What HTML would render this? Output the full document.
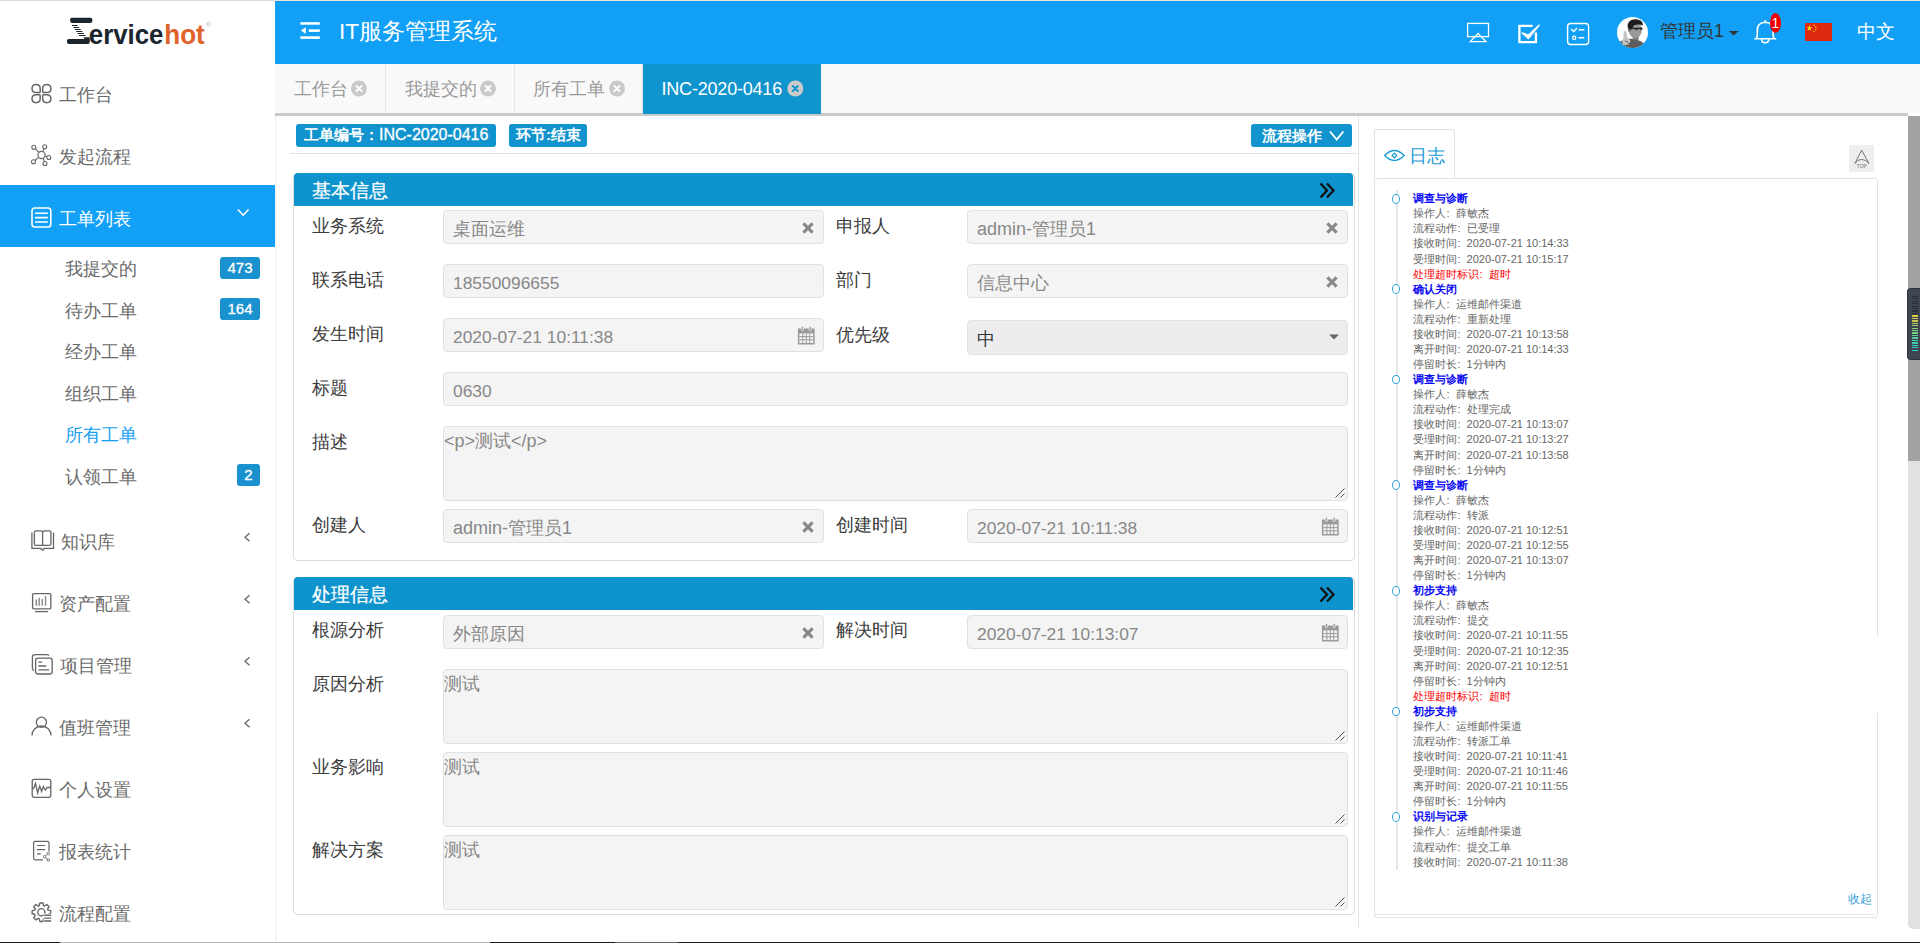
<!DOCTYPE html>
<html><head><meta charset="utf-8">
<style>
*{box-sizing:border-box;margin:0;padding:0}
html,body{width:1920px;height:943px;overflow:hidden;background:#fff;font-family:"Liberation Sans",sans-serif;}
.a{position:absolute;white-space:nowrap}
#topline{left:0;top:0;width:1920px;height:1px;background:#d9dadf}
#side{left:0;top:1px;width:277px;height:942px;background:#fff;border-right:1px solid #fafafa}
#hdr{left:275px;top:1px;width:1645px;height:63px;background:#12a0f6}
.mi{left:0;width:275px;height:62px}
.mt{font-size:18px;color:#6b6b6b;line-height:20px}
.sub{font-size:18px;color:#6b6b6b;line-height:20px;left:65px}
.bdg{background:#1992cf;color:#fff;font-size:15px;-webkit-text-stroke:0.3px #fff;border-radius:3px;text-align:center;line-height:22px;height:22px}
.tab{top:64px;height:49px;border-right:1px solid #e6e6e6;background:#f9f9f9}
.tabt{font-size:18px;color:#999;line-height:20px;top:15px}
.cx{width:16px;height:16px;border-radius:50%;background:#c9c9c9}
.lbl{font-size:18px;color:#3c3c3c;line-height:20px}
.inp{background:#f4f4f4;border:1px solid #dce3e8;border-radius:4px}
.val{font-size:18px;color:#888;line-height:20px}
.sech{left:294px;width:1059px;height:33px;background:#0f93cc;border-radius:4px 4px 0 0}
.sect{font-size:19px;color:#fff;line-height:20px;-webkit-text-stroke:0.25px #fff}
.log{font-size:11px;line-height:15.08px;color:#666}
.log b{color:#0808f6;font-weight:bold;display:block}
.log i{color:#f00;font-style:normal;display:block}
.log span{display:block}
.log em{font-style:normal;display:inline-block;width:9.6px;padding-left:0.6px}
</style></head><body>
<div class="a" id="topline"></div>
<div class="a" id="side"></div>
<div class="a" style="left:275px;top:1px;width:1px;height:942px;background:#f2f2f2"></div>
<div class="a" id="hdr"></div>
<div class="a" style="left:275px;top:0;width:1645px;height:1px;background:#efe2dc"></div>
<div class="a" style="left:275px;top:1px;width:1645px;height:1px;background:#0a9cf8"></div>
<div class="a" style="left:0;top:185px;width:275px;height:62px;background:#12a1f7"></div>

<!-- logo -->
<svg class="a" style="left:0;top:0" width="275" height="62" viewBox="0 0 275 62">
 <g fill="#1b252e">
  <path d="M71.5 17.8 H90.3 Q92.4 17.8 92.4 19.9 V20.8 Q92.4 22.9 90.3 22.9 H72.2 Q70.2 22.9 70.2 20.9 V19.6 Q70.2 17.8 71.5 17.8 Z"/>
  <path d="M68.6 38.9 H84.6 L83.4 37.2 H88.8 Q89.8 37.2 89.8 39.4 V41.8 Q89.8 44 87.8 44 H68.8 Q67 44 67 42 V40.6 Q67 38.9 68.6 38.9 Z"/>
 </g>
 <g stroke="#1b252e" stroke-width="1.05">
  <path d="M72 25.5 H77.6 M73.4 27.5 H79.2 M74.8 29.5 H80.8 M76.2 31.5 H82.4 M77.6 33.5 H84 M79 35.5 H85.6"/>
 </g>
 <text x="88.8" y="44" font-family="Liberation Sans" font-weight="bold" font-size="27.4" fill="#1b252e" textLength="74.5" lengthAdjust="spacingAndGlyphs">ervice</text>
 <text x="164.3" y="44" font-family="Liberation Sans" font-weight="bold" font-size="27.4" fill="#e0612a" textLength="40.5" lengthAdjust="spacingAndGlyphs">hot</text>
 <circle cx="208.6" cy="24" r="1.7" fill="none" stroke="#888" stroke-width="0.5"/>
</svg>

<!-- header content -->
<svg class="a" style="left:290px;top:15px" width="40" height="30" viewBox="290 15 40 30" fill="#fff">
  <rect x="300.4" y="22.2" width="19.4" height="2.5"/>
  <rect x="308.8" y="29.3" width="11" height="2.6"/>
  <rect x="300.4" y="36.3" width="19.4" height="2.6"/>
  <path d="M300.8 30.5 L305.9 27.2 V33.7 Z"/>
</svg>
<div class="a" style="left:339px;top:19.5px;font-size:22.6px;line-height:24px;color:#fff">IT服务管理系统</div>
<svg class="a" style="left:1460px;top:10px" width="460" height="45" viewBox="1460 10 460 45" fill="none" stroke="#fff">
  <rect x="1467.6" y="23.4" width="20.9" height="13.2" stroke-width="1.3"/>
  <path d="M1470.3 41.6 L1478.1 33.5 L1485.9 41.6 Z" stroke-width="1.3"/>
  <path d="M1535.9 32.5 V42.1 H1519.4 V25.9 H1532.6" stroke-width="2.3"/>
  <path d="M1522.3 33 L1528.3 38.5 L1539 25.2 L1528.3 35.2 Z" fill="#fff" stroke-width="1.5" stroke-linejoin="round"/>
  <rect x="1567.6" y="23.5" width="21" height="21" rx="3" stroke-width="1.4"/>
  <path d="M1571 29 L1573.8 31.6 L1576.8 28 M1578.6 29.8 H1584.3 M1578.6 37.8 H1584.3" stroke-width="1.4"/>
  <circle cx="1574.2" cy="37.8" r="1.6" stroke-width="1.3"/>
  <path d="M1756.3 38.7 Q1757.3 37 1757.3 34.5 V30.5 Q1757.3 22.6 1765.2 22.3 Q1773.1 22.6 1773.1 30.5 V34.5 Q1773.1 37 1774.1 38.7 M1754.3 38.7 H1776.2 M1761.6 39 Q1761.6 42.8 1765.2 42.8 Q1768.8 42.8 1768.8 39 M1765.2 20.2 V22.3" stroke-width="1.6"/>
</svg>
<div class="a" style="left:1617px;top:17px;width:31px;height:31px;border-radius:50%;background:#fff;overflow:hidden">
 <svg width="31" height="31" viewBox="0 0 31 31">
  <path d="M2 25 Q9 20.5 17 22 Q24 23.5 28 27 L28 31 H2 Z" fill="#5c5c5c"/>
  <path d="M15 17 L22 17 L21.5 23 L16 23 Z" fill="#7a7a7a"/>
  <ellipse cx="18.3" cy="12.8" rx="6.6" ry="8.3" fill="#9a9a9a"/>
  <ellipse cx="12.4" cy="12.2" rx="1.6" ry="2.6" fill="#6e6e6e"/>
  <path d="M10.6 10 Q10.5 2.3 18.3 2.3 Q25.8 2.3 26 8.5 Q22 6.5 17 8.2 L14.6 12.6 Q12 12.5 10.6 10 Z" fill="#1c1c1c"/>
  <path d="M14.5 11.4 H25.4" stroke="#222" stroke-width="1.3"/>
  <path d="M17 11.6 Q19.5 14.6 22 11.6 M22.5 11.6 Q24 13.8 25.5 11.8" stroke="#333" stroke-width="0.9" fill="none"/>
  <path d="M6.8 14.5 Q8.3 13.3 9.4 15 L10.2 20.6 L13.5 23.2 L12 28 L6 28 Q4.2 25 6.3 21.5 Z" fill="#c2c2c2"/>
  <path d="M8 24 L11 25 M10 27 L13 26.5" stroke="#555" stroke-width="0.8"/>
 </svg>
</div>
<div class="a" style="left:1660px;top:20.5px;font-size:18px;line-height:20px;color:#333">管理员1</div>
<svg class="a" style="left:1725px;top:25px" width="15" height="15" viewBox="1725 25 15 15"><path d="M1728.8 31 H1738.6 L1733.7 35.4 Z" fill="#333"/></svg>
<div class="a" style="left:1770px;top:13px;width:11px;height:20px;border-radius:50%;background:#f20000;color:#fff;font-size:14px;line-height:20px;text-align:center">1</div>
<svg class="a" style="left:1805px;top:23px" width="27" height="18" viewBox="0 0 30 20">
  <rect width="30" height="20" fill="#de2910"/>
  <path d="M5 2.2 L5.9 4.6 H8.4 L6.4 6.1 L7.1 8.6 L5 7.1 L2.9 8.6 L3.6 6.1 L1.6 4.6 H4.1Z" fill="#ffde00"/>
  <circle cx="10" cy="2.5" r="0.8" fill="#ffde00"/><circle cx="12" cy="4.5" r="0.8" fill="#ffde00"/>
  <circle cx="12" cy="7.3" r="0.8" fill="#ffde00"/><circle cx="10" cy="9.3" r="0.8" fill="#ffde00"/>
</svg>
<div class="a" style="left:1857px;top:21px;font-size:18.6px;line-height:21px;color:#fff">中文</div>

<!-- tabs -->
<div class="a" style="left:275px;top:64px;width:1645px;height:49px;background:#f9f9f9"></div>
<div class="a" style="left:275px;top:113px;width:1633px;height:3px;background:#cacaca"></div>
<div class="a tab" style="left:275px;width:111px"></div>
<div class="a tab" style="left:386px;width:129px"></div>
<div class="a tab" style="left:515px;width:128px"></div>
<div class="a" style="left:643px;top:64px;width:178px;height:50px;background:#0f94cd"></div>
<div class="a tabt" style="left:294px;top:79px">工作台</div>
<div class="a tabt" style="left:405px;top:79px">我提交的</div>
<div class="a tabt" style="left:533px;top:79px">所有工单</div>
<div class="a tabt" style="left:661.5px;top:79px;color:#fff;letter-spacing:-0.2px">INC-2020-0416</div>
<svg class="a" style="left:0;top:70px" width="820" height="40" viewBox="0 70 820 40">
 <g transform="translate(0.5 0)">
  <circle cx="358.5" cy="88.5" r="8" fill="#cacaca"/>
  <circle cx="487.5" cy="88.5" r="8" fill="#cacaca"/>
  <circle cx="616.5" cy="88.5" r="8" fill="#cacaca"/>
  <circle cx="794.8" cy="88.5" r="8" fill="#cacaca"/>
 </g>
 <g stroke="#fff" stroke-width="1.9" stroke-linecap="round" transform="translate(0.5 0)">
  <path d="M356.0 86 L361.0 91 M361.0 86 L356.0 91"/>
  <path d="M485.0 86 L490.0 91 M490.0 86 L485.0 91"/>
  <path d="M614.0 86 L619.0 91 M619.0 86 L614.0 91"/>
  <path d="M792.3 86 L797.3 91 M797.3 86 L792.3 91" stroke="#0f94cd"/>
 </g>
</svg>


<!-- main content -->
<div class="a" style="left:296px;top:124px;width:200px;height:23px;background:#1193cd;border-radius:3px"></div>
<div class="a" style="left:304px;top:126px;font-size:15px;line-height:18px;color:#fff;font-weight:bold">工单编号：<span style="font-weight:normal;font-size:16px;-webkit-text-stroke:0.3px #fff">INC-2020-0416</span></div>
<div class="a" style="left:509px;top:124px;width:78px;height:23px;background:#1193cd;border-radius:3px"></div>
<div class="a" style="left:516px;top:126px;font-size:15px;line-height:18px;color:#fff;font-weight:bold">环节:结束</div>
<div class="a" style="left:1251px;top:124px;width:101px;height:23px;background:#1193cd;border-radius:3px"></div>
<div class="a" style="left:1262px;top:126.5px;font-size:15px;line-height:18px;color:#fff;font-weight:bold">流程操作</div>
<svg class="a" style="left:1328px;top:129px" width="18" height="14" viewBox="0 0 18 14"><path d="M2 2.5 L8.7 10.5 L15.4 2.5" fill="none" stroke="#fff" stroke-width="1.9"/></svg>
<div class="a" style="left:290px;top:153px;width:1067px;height:1px;background:#e3e3e3"></div>
<div class="a" style="left:1358px;top:116px;width:1px;height:812px;background:#e3e3e3"></div>

<!-- panel 1 -->
<div class="a" style="left:293px;top:173px;width:1062px;height:388px;border:1px solid #dcdcdc;border-radius:4px"></div>
<div class="a sech" style="top:173px"></div>
<div class="a sect" style="left:312px;top:180.5px">基本信息</div>
<!-- panel 2 -->
<div class="a" style="left:293px;top:577px;width:1062px;height:338px;border:1px solid #dcdcdc;border-radius:4px"></div>
<div class="a sech" style="top:577px"></div>
<div class="a sect" style="left:312px;top:584.5px">处理信息</div>
<svg class="a" style="left:1316px;top:180px" width="24" height="22" viewBox="0 0 24 22" fill="none" stroke="#111" stroke-width="2.3"><path d="M4.5 3.5 L11 10.5 L4.5 17.5 M11 3.5 L17.5 10.5 L11 17.5"/></svg>
<svg class="a" style="left:1316px;top:584px" width="24" height="22" viewBox="0 0 24 22" fill="none" stroke="#111" stroke-width="2.3"><path d="M4.5 3.5 L11 10.5 L4.5 17.5 M11 3.5 L17.5 10.5 L11 17.5"/></svg>
<div class="a lbl" style="left:312px;top:216px">业务系统</div>
<div class="a inp" style="left:443px;top:210px;width:381px;height:34px"></div>
<div class="a val" style="left:453px;top:219px">桌面运维</div>
<svg class="a" style="left:801px;top:221px" width="14" height="14" viewBox="0 0 14 14"><path d="M2.4 2.4 L11.6 11.6 M11.6 2.4 L2.4 11.6" stroke="#888" stroke-width="3.1" stroke-linecap="butt"/></svg>
<div class="a lbl" style="left:836px;top:216px">申报人</div>
<div class="a inp" style="left:967px;top:210px;width:381px;height:34px"></div>
<div class="a val" style="left:977px;top:219px">admin-管理员1</div>
<svg class="a" style="left:1325px;top:221px" width="14" height="14" viewBox="0 0 14 14"><path d="M2.4 2.4 L11.6 11.6 M11.6 2.4 L2.4 11.6" stroke="#888" stroke-width="3.1" stroke-linecap="butt"/></svg>
<div class="a lbl" style="left:312px;top:270px">联系电话</div>
<div class="a inp" style="left:443px;top:264px;width:381px;height:34px"></div>
<div class="a val" style="left:453px;top:273px"><span style="font-size:17.4px">18550096655</span></div>
<div class="a lbl" style="left:836px;top:270px">部门</div>
<div class="a inp" style="left:967px;top:264px;width:381px;height:34px"></div>
<div class="a val" style="left:977px;top:273px">信息中心</div>
<svg class="a" style="left:1325px;top:275px" width="14" height="14" viewBox="0 0 14 14"><path d="M2.4 2.4 L11.6 11.6 M11.6 2.4 L2.4 11.6" stroke="#888" stroke-width="3.1" stroke-linecap="butt"/></svg>
<div class="a lbl" style="left:312px;top:324px">发生时间</div>
<div class="a inp" style="left:443px;top:318px;width:381px;height:34px"></div>
<div class="a val" style="left:453px;top:327px"><span style="font-size:17.4px">2020-07-21 10:11:38</span></div>
<svg class="a" style="left:797.3px;top:325px" width="20" height="20" viewBox="0 0 20 20">
<path d="M0.9 3.5 H17.1 Q17.7 3.5 17.7 4.1 V19.1 Q17.7 19.5 17.3 19.5 H1.3 Q0.9 19.5 0.9 19.1 Z" fill="#9a9a9a"/>
<path d="M2.4 8.4 H16.2 V18 H2.4 Z" fill="#f4f4f4"/>
<path d="M2.4 11.6 H16.2 M2.4 14.8 H16.2 M5.85 8.4 V18 M9.3 8.4 V18 M12.75 8.4 V18" stroke="#9a9a9a" stroke-width="1"/>
<rect x="4.3" y="1.5" width="2.2" height="4" rx="1" fill="#9a9a9a" stroke="#f4f4f4" stroke-width="0.8"/><rect x="12.1" y="1.5" width="2.2" height="4" rx="1" fill="#9a9a9a" stroke="#f4f4f4" stroke-width="0.8"/>
</svg>
<div class="a lbl" style="left:836px;top:325px">优先级</div>
<div class="a inp" style="left:967px;top:320px;width:381px;height:35px;background:#ededed"></div>
<div class="a val" style="left:977px;top:329px;color:#333">中</div>
<svg class="a" style="left:1328px;top:333px" width="12" height="8" viewBox="0 0 12 8"><path d="M1 1.5 H11 L6 6.5 Z" fill="#666"/></svg>
<div class="a lbl" style="left:312px;top:378px">标题</div>
<div class="a inp" style="left:443px;top:372px;width:905px;height:34px"></div>
<div class="a val" style="left:453px;top:381px"><span style="font-size:17.4px">0630</span></div>
<div class="a lbl" style="left:312px;top:432px">描述</div>
<div class="a inp" style="left:443px;top:426px;width:905px;height:75px"></div>
<div class="a val" style="left:444px;top:431px">&lt;p&gt;测试&lt;/p&gt;</div>
<svg class="a" style="left:1334px;top:487px" width="12" height="12" viewBox="0 0 12 12"><path d="M1.5 10.5 L10.5 1.5 M6.5 10.5 L10.5 6.5" stroke="#555" stroke-width="1"/></svg>
<div class="a lbl" style="left:312px;top:515px">创建人</div>
<div class="a inp" style="left:443px;top:509px;width:381px;height:34px"></div>
<div class="a val" style="left:453px;top:518px">admin-管理员1</div>
<svg class="a" style="left:801px;top:520px" width="14" height="14" viewBox="0 0 14 14"><path d="M2.4 2.4 L11.6 11.6 M11.6 2.4 L2.4 11.6" stroke="#888" stroke-width="3.1" stroke-linecap="butt"/></svg>
<div class="a lbl" style="left:836px;top:515px">创建时间</div>
<div class="a inp" style="left:967px;top:509px;width:381px;height:34px"></div>
<div class="a val" style="left:977px;top:518px"><span style="font-size:17.4px">2020-07-21 10:11:38</span></div>
<svg class="a" style="left:1321.3px;top:516px" width="20" height="20" viewBox="0 0 20 20">
<path d="M0.9 3.5 H17.1 Q17.7 3.5 17.7 4.1 V19.1 Q17.7 19.5 17.3 19.5 H1.3 Q0.9 19.5 0.9 19.1 Z" fill="#9a9a9a"/>
<path d="M2.4 8.4 H16.2 V18 H2.4 Z" fill="#f4f4f4"/>
<path d="M2.4 11.6 H16.2 M2.4 14.8 H16.2 M5.85 8.4 V18 M9.3 8.4 V18 M12.75 8.4 V18" stroke="#9a9a9a" stroke-width="1"/>
<rect x="4.3" y="1.5" width="2.2" height="4" rx="1" fill="#9a9a9a" stroke="#f4f4f4" stroke-width="0.8"/><rect x="12.1" y="1.5" width="2.2" height="4" rx="1" fill="#9a9a9a" stroke="#f4f4f4" stroke-width="0.8"/>
</svg>
<div class="a lbl" style="left:312px;top:620px">根源分析</div>
<div class="a inp" style="left:443px;top:615px;width:381px;height:34px"></div>
<div class="a val" style="left:453px;top:624px">外部原因</div>
<svg class="a" style="left:801px;top:626px" width="14" height="14" viewBox="0 0 14 14"><path d="M2.4 2.4 L11.6 11.6 M11.6 2.4 L2.4 11.6" stroke="#888" stroke-width="3.1" stroke-linecap="butt"/></svg>
<div class="a lbl" style="left:836px;top:620px">解决时间</div>
<div class="a inp" style="left:967px;top:615px;width:381px;height:34px"></div>
<div class="a val" style="left:977px;top:624px"><span style="font-size:17.4px">2020-07-21 10:13:07</span></div>
<svg class="a" style="left:1321.3px;top:622px" width="20" height="20" viewBox="0 0 20 20">
<path d="M0.9 3.5 H17.1 Q17.7 3.5 17.7 4.1 V19.1 Q17.7 19.5 17.3 19.5 H1.3 Q0.9 19.5 0.9 19.1 Z" fill="#9a9a9a"/>
<path d="M2.4 8.4 H16.2 V18 H2.4 Z" fill="#f4f4f4"/>
<path d="M2.4 11.6 H16.2 M2.4 14.8 H16.2 M5.85 8.4 V18 M9.3 8.4 V18 M12.75 8.4 V18" stroke="#9a9a9a" stroke-width="1"/>
<rect x="4.3" y="1.5" width="2.2" height="4" rx="1" fill="#9a9a9a" stroke="#f4f4f4" stroke-width="0.8"/><rect x="12.1" y="1.5" width="2.2" height="4" rx="1" fill="#9a9a9a" stroke="#f4f4f4" stroke-width="0.8"/>
</svg>
<div class="a lbl" style="left:312px;top:674px">原因分析</div>
<div class="a inp" style="left:443px;top:669px;width:905px;height:75px"></div>
<div class="a val" style="left:444px;top:674px">测试</div>
<svg class="a" style="left:1334px;top:730px" width="12" height="12" viewBox="0 0 12 12"><path d="M1.5 10.5 L10.5 1.5 M6.5 10.5 L10.5 6.5" stroke="#555" stroke-width="1"/></svg>
<div class="a lbl" style="left:312px;top:757px">业务影响</div>
<div class="a inp" style="left:443px;top:752px;width:905px;height:75px"></div>
<div class="a val" style="left:444px;top:757px">测试</div>
<svg class="a" style="left:1334px;top:813px" width="12" height="12" viewBox="0 0 12 12"><path d="M1.5 10.5 L10.5 1.5 M6.5 10.5 L10.5 6.5" stroke="#555" stroke-width="1"/></svg>
<div class="a lbl" style="left:312px;top:840px">解决方案</div>
<div class="a inp" style="left:443px;top:835px;width:905px;height:75px"></div>
<div class="a val" style="left:444px;top:840px">测试</div>
<svg class="a" style="left:1334px;top:896px" width="12" height="12" viewBox="0 0 12 12"><path d="M1.5 10.5 L10.5 1.5 M6.5 10.5 L10.5 6.5" stroke="#555" stroke-width="1"/></svg>


<!-- log panel -->
<div class="a" style="left:1374px;top:178px;width:504px;height:740px;border:1px solid #e2e2e2;border-radius:3px"></div>
<div class="a" style="left:1870px;top:637px;width:12px;height:76px;background:#fff"></div>
<div class="a" style="left:1374px;top:129px;width:81px;height:49px;border:1px solid #e2e2e2;border-bottom:none;border-radius:3px 3px 0 0;background:#fff"></div>
<svg class="a" style="left:1382px;top:146px" width="24" height="20" viewBox="0 0 24 20" fill="none" stroke="#1a9ad6" stroke-width="1.3">
 <path d="M2.6 9.5 Q12.4 -0.5 22.2 9.5 Q12.4 19.5 2.6 9.5 Z"/><path d="M12.4 7.2 L14.7 9.5 L12.4 11.8 L10.1 9.5 Z" stroke-width="1.2"/>
</svg>
<div class="a" style="left:1409px;top:146px;font-size:18px;line-height:20px;color:#1a9ad6">日志</div>
<div class="a" style="left:1849px;top:145px;width:25px;height:27px;background:#eeeeee"></div>
<svg class="a" style="left:1849px;top:145px" width="25" height="27" viewBox="1849 145 25 27" fill="none" stroke="#666" stroke-width="0.9">
 <path d="M1861.6 150.2 L1869 163.5 Q1865.5 159.4 1861.6 159.4 Q1857.7 159.4 1854.9 163.5 Z"/>
 <text x="1861.8" y="168.3" font-family="Liberation Sans" font-size="5" fill="#777" stroke="none" text-anchor="middle">TOP</text>
</svg>
<div class="a" style="left:1856px;top:20px"></div>
<div class="a" style="left:1396px;top:190px;width:1.8px;height:680px;background:#e2e5ea"></div>
<div class="a log" style="left:1413px;top:191.2px">
<b>调查与诊断</b>
<span>操作人<em>:</em>薛敏杰</span>
<span>流程动作<em>:</em>已受理</span>
<span>接收时间<em>:</em>2020-07-21 10:14:33</span>
<span>受理时间<em>:</em>2020-07-21 10:15:17</span>
<i>处理超时标识<em>:</em>超时</i>
<b>确认关闭</b>
<span>操作人<em>:</em>运维邮件渠道</span>
<span>流程动作<em>:</em>重新处理</span>
<span>接收时间<em>:</em>2020-07-21 10:13:58</span>
<span>离开时间<em>:</em>2020-07-21 10:14:33</span>
<span>停留时长<em>:</em>1分钟内</span>
<b>调查与诊断</b>
<span>操作人<em>:</em>薛敏杰</span>
<span>流程动作<em>:</em>处理完成</span>
<span>接收时间<em>:</em>2020-07-21 10:13:07</span>
<span>受理时间<em>:</em>2020-07-21 10:13:27</span>
<span>离开时间<em>:</em>2020-07-21 10:13:58</span>
<span>停留时长<em>:</em>1分钟内</span>
<b>调查与诊断</b>
<span>操作人<em>:</em>薛敏杰</span>
<span>流程动作<em>:</em>转派</span>
<span>接收时间<em>:</em>2020-07-21 10:12:51</span>
<span>受理时间<em>:</em>2020-07-21 10:12:55</span>
<span>离开时间<em>:</em>2020-07-21 10:13:07</span>
<span>停留时长<em>:</em>1分钟内</span>
<b>初步支持</b>
<span>操作人<em>:</em>薛敏杰</span>
<span>流程动作<em>:</em>提交</span>
<span>接收时间<em>:</em>2020-07-21 10:11:55</span>
<span>受理时间<em>:</em>2020-07-21 10:12:35</span>
<span>离开时间<em>:</em>2020-07-21 10:12:51</span>
<span>停留时长<em>:</em>1分钟内</span>
<i>处理超时标识<em>:</em>超时</i>
<b>初步支持</b>
<span>操作人<em>:</em>运维邮件渠道</span>
<span>流程动作<em>:</em>转派工单</span>
<span>接收时间<em>:</em>2020-07-21 10:11:41</span>
<span>受理时间<em>:</em>2020-07-21 10:11:46</span>
<span>离开时间<em>:</em>2020-07-21 10:11:55</span>
<span>停留时长<em>:</em>1分钟内</span>
<b>识别与记录</b>
<span>操作人<em>:</em>运维邮件渠道</span>
<span>流程动作<em>:</em>提交工单</span>
<span>接收时间<em>:</em>2020-07-21 10:11:38</span>
</div>
<div class="a" style="left:1392.2px;top:193.94px;width:8px;height:9.6px;border:1.7px solid #30a2d8;border-radius:50%;background:#fff"></div>
<div class="a" style="left:1392.2px;top:284.42px;width:8px;height:9.6px;border:1.7px solid #30a2d8;border-radius:50%;background:#fff"></div>
<div class="a" style="left:1392.2px;top:374.90px;width:8px;height:9.6px;border:1.7px solid #30a2d8;border-radius:50%;background:#fff"></div>
<div class="a" style="left:1392.2px;top:480.46px;width:8px;height:9.6px;border:1.7px solid #30a2d8;border-radius:50%;background:#fff"></div>
<div class="a" style="left:1392.2px;top:586.02px;width:8px;height:9.6px;border:1.7px solid #30a2d8;border-radius:50%;background:#fff"></div>
<div class="a" style="left:1392.2px;top:706.66px;width:8px;height:9.6px;border:1.7px solid #30a2d8;border-radius:50%;background:#fff"></div>
<div class="a" style="left:1392.2px;top:812.22px;width:8px;height:9.6px;border:1.7px solid #30a2d8;border-radius:50%;background:#fff"></div>

<div class="a" style="left:1848px;top:892px;font-size:12px;line-height:15px;color:#3aa0d8">收起</div>
<!-- scrollbar -->
<div class="a" style="left:1908px;top:116px;width:12px;height:812.5px;background:#e1e1e1;border-radius:0 0 0 5px"></div>
<div class="a" style="left:1908px;top:116px;width:12px;height:345px;background:#a3a3a3"></div>
<div class="a" style="left:1907.4px;top:287.6px;width:13px;height:72.6px;background:#3e4452;border:1px solid #2e323c;border-right:none;border-radius:4px 0 0 4px"></div>
<div class="a" style="left:1912px;top:295.7px;width:5.5px;height:1.4px;background:#2b2f38"></div><div class="a" style="left:1912px;top:298.1px;width:5.5px;height:1.4px;background:#2b2f38"></div><div class="a" style="left:1912px;top:300.6px;width:5.5px;height:1.4px;background:#2b2f38"></div><div class="a" style="left:1912px;top:303.0px;width:5.5px;height:1.4px;background:#2b2f38"></div><div class="a" style="left:1912px;top:305.5px;width:5.5px;height:1.4px;background:#2b2f38"></div><div class="a" style="left:1912px;top:307.9px;width:5.5px;height:1.4px;background:#2b2f38"></div><div class="a" style="left:1912px;top:310.4px;width:5.5px;height:1.4px;background:#2b2f38"></div><div class="a" style="left:1912px;top:312.8px;width:5.5px;height:1.4px;background:#2b2f38"></div><div class="a" style="left:1912px;top:315.3px;width:5.5px;height:1.4px;background:#d9c640"></div><div class="a" style="left:1912px;top:317.7px;width:5.5px;height:1.4px;background:#d6c445"></div><div class="a" style="left:1912px;top:320.2px;width:5.5px;height:1.4px;background:#c9c650"></div><div class="a" style="left:1912px;top:322.6px;width:5.5px;height:1.4px;background:#b8c85a"></div><div class="a" style="left:1912px;top:325.1px;width:5.5px;height:1.4px;background:#a6cc68"></div><div class="a" style="left:1912px;top:327.5px;width:5.5px;height:1.4px;background:#93cf74"></div><div class="a" style="left:1912px;top:330.0px;width:5.5px;height:1.4px;background:#82d07e"></div><div class="a" style="left:1912px;top:332.4px;width:5.5px;height:1.4px;background:#70d088"></div><div class="a" style="left:1912px;top:334.9px;width:5.5px;height:1.4px;background:#5fd093"></div><div class="a" style="left:1912px;top:337.3px;width:5.5px;height:1.4px;background:#50cf9d"></div><div class="a" style="left:1912px;top:339.8px;width:5.5px;height:1.4px;background:#45cfa6"></div><div class="a" style="left:1912px;top:342.2px;width:5.5px;height:1.4px;background:#3dcfb0"></div><div class="a" style="left:1912px;top:344.7px;width:5.5px;height:1.4px;background:#36cfb8"></div><div class="a" style="left:1912px;top:347.1px;width:5.5px;height:1.4px;background:#30cfc0"></div><div class="a" style="left:1912px;top:349.6px;width:5.5px;height:1.4px;background:#2ccfc6"></div>


<!-- menu -->
<svg class="a" style="left:0;top:0" width="60" height="943" viewBox="0 0 60 943" fill="none" stroke="#666" stroke-width="1.5">
 <!-- workbench -->
 <g stroke-width="1.5"><path d="M36.10 84.60 L36.10 84.6 Q40.2 84.6 40.2 88.70 L40.2 91.80 Q40.2 92.6 39.40 92.6 L36.10 92.6 Q32.0 92.6 32.0 88.50 L32.0 88.70 Q32.0 84.6 36.10 84.6 Z"/><path d="M46.80 84.60 L46.80 84.6 Q50.9 84.6 50.9 88.70 L50.9 88.50 Q50.9 92.6 46.80 92.6 L43.50 92.6 Q42.7 92.6 42.7 91.80 L42.7 88.70 Q42.7 84.6 46.80 84.6 Z"/><path d="M36.10 94.70 L39.40 94.7 Q40.2 94.7 40.2 95.50 L40.2 98.60 Q40.2 102.7 36.10 102.7 L36.10 102.7 Q32.0 102.7 32.0 98.60 L32.0 98.80 Q32.0 94.7 36.10 94.7 Z"/><path d="M46.80 94.70 L46.80 94.7 Q50.9 94.7 50.9 98.80 L50.9 98.60 Q50.9 102.7 46.80 102.7 L46.80 102.7 Q42.7 102.7 42.7 98.60 L42.7 95.50 Q42.7 94.7 43.50 94.7 Z"/></g>
 <!-- flow -->
 <g stroke-width="1.1">
 <circle cx="41.5" cy="155" r="3.6"/>
 <circle cx="33.8" cy="147.3" r="2"/><circle cx="44.7" cy="146.8" r="2"/>
 <circle cx="48.8" cy="157.5" r="2"/><circle cx="33.5" cy="161.8" r="2"/><circle cx="45" cy="163.5" r="2"/>
 <path d="M35.2 148.7 L38.9 152.4 M44 148.6 L42.8 151.6 M46.8 157 L45 156 M35 160.5 L38.6 157.3 M44.4 161.6 L43.2 158.3"/>
 </g>
 <!-- list (white) -->
 <g stroke="#fff" stroke-width="1.6">
  <rect x="32" y="208" width="18.8" height="19" rx="2.8"/>
  <path d="M35 213.2 H47.8 M35 217.6 H47.8 M35 222 H47.8"/>
 </g>
 <!-- book -->
 <g stroke-width="1.3">
  <path d="M31.9 532.6 V548.4 H40.6 L42.6 550.1 L44.6 548.4 H53.5 V532.6"/>
  <path d="M42.6 545.4 H35.9 Q34.4 545.4 34.4 543.9 V532.3 Q34.4 530.8 35.9 530.8 H40.6 Q42.6 530.8 42.6 532.8 Q42.6 530.8 44.6 530.8 H49.4 Q50.9 530.8 50.9 532.3 V543.9 Q50.9 545.4 49.4 545.4 H42.6 V532.8"/>
 </g>
 <!-- monitor -->
 <g stroke-width="1.3">
  <rect x="32.6" y="593.6" width="18.2" height="15.2" rx="1"/>
  <path d="M35 611.6 H48"/>
  <path d="M36.3 599.5 V605.8 M39.2 597.8 V605.8 M42.2 599 V605.8 M45.5 596 V605.8" stroke-width="1.4" stroke="#888"/>
 </g>
 <!-- project -->
 <g stroke-width="1.3">
  <path d="M49 655.5 Q48 654.6 46.5 654.6 H35 Q32.4 654.6 32.4 657.2 V668 Q32.4 670 34 670.6"/>
  <rect x="35.6" y="658.2" width="16.6" height="15.8" rx="2.5"/>
  <path d="M38.4 662.2 H42.2 M38.4 666 H46.4 M38.4 669.8 H49.2"/>
 </g>
 <!-- user -->
 <g stroke-width="1.3">
  <circle cx="41.4" cy="722.3" r="5.1"/>
  <path d="M32 735.5 A9.5 9.5 0 0 1 51 735.5"/>
 </g>
 <!-- activity -->
 <g stroke-width="1.3">
  <rect x="32.2" y="779.3" width="18.6" height="18" rx="2"/>
  <path d="M32.2 788.5 H33.6 L35.5 783.5 L37.6 793 L39.7 786 L41.6 791.5 L43.3 786.5 L45.3 790 L47 787.5 H50.8"/>
 </g>
 <!-- report -->
 <g stroke-width="1.2">
  <path d="M43 859.8 H35.3 Q33.6 859.8 33.6 858.1 V843 Q33.6 841.3 35.3 841.3 H47.3 Q49 841.3 49 843 V851.5"/>
  <path d="M37 845.5 H45.2 M37 849.7 H45.2 M37 853.9 H40.8"/>
 </g>
 <g stroke-width="1" stroke="#777">
  <circle cx="48.3" cy="853.6" r="1.3"/><circle cx="44.6" cy="856.8" r="1.3"/><circle cx="48.3" cy="860" r="1.3"/>
  <path d="M47.2 854.4 L45.7 856 M45.7 857.6 L47.2 859.2"/>
 </g>
 <!-- gear -->
 <g stroke-width="1.4" stroke-linejoin="round">
  <path d="M39.33 905.51 L39.81 902.94 L42.99 902.94 L43.47 905.51 L44.67 906.01 L46.83 904.52 L49.08 906.77 L47.59 908.93 L48.09 910.13 L50.66 910.61 L50.66 913.79 L48.09 914.27 L47.59 915.47 L49.08 917.63 L46.83 919.88 L44.67 918.39 L43.47 918.89 L42.99 921.46 L39.81 921.46 L39.33 918.89 L38.13 918.39 L35.97 919.88 L33.72 917.63 L35.21 915.47 L34.71 914.27 L32.14 913.79 L32.14 910.61 L34.71 910.13 L35.21 908.93 L33.72 906.77 L35.97 904.52 L38.13 906.01 Z"/>
  <circle cx="41.4" cy="912.2" r="3.6"/>
  <rect x="43.6" y="913.6" width="9" height="10" fill="#fff" stroke="none"/>
  <path d="M44.2 915.2 H51.2 M44.2 918.1 H51.2 M44.2 921 H51.2" stroke-width="1.4"/>
 </g>
 <!-- chevrons -->
</svg>
<svg class="a" style="left:230px;top:190px" width="30" height="560" viewBox="230 190 30 560" fill="none" stroke="#666" stroke-width="1.3">
  <path d="M237.8 209.5 L243.2 215.2 L248.6 209.5" stroke="#fff" stroke-width="1.6"/>
  <path d="M249.5 533.2 L245 537.2 L249.5 541.2"/>
  <path d="M249.5 595.2 L245 599.2 L249.5 603.2"/>
  <path d="M249.5 657.2 L245 661.2 L249.5 665.2"/>
  <path d="M249.5 719.2 L245 723.2 L249.5 727.2"/>
</svg>

<div class="a mt" style="left:59px;top:85px">工作台</div>
<div class="a mt" style="left:59px;top:147px">发起流程</div>
<div class="a mt" style="left:59px;top:209px;color:#fff">工单列表</div>
<div class="a sub" style="top:259px">我提交的</div>
<div class="a sub" style="top:300.5px">待办工单</div>
<div class="a sub" style="top:342px">经办工单</div>
<div class="a sub" style="top:383.5px">组织工单</div>
<div class="a sub" style="top:425px;color:#13a0f2">所有工单</div>
<div class="a sub" style="top:466.5px">认领工单</div>
<div class="a bdg" style="left:220px;top:257px;width:40px">473</div>
<div class="a bdg" style="left:220px;top:297.7px;width:40px">164</div>
<div class="a bdg" style="left:237px;top:464px;width:23px">2</div>
<div class="a mt" style="left:61px;top:532px">知识库</div>
<div class="a mt" style="left:58.5px;top:594px">资产配置</div>
<div class="a mt" style="left:60px;top:656px">项目管理</div>
<div class="a mt" style="left:59px;top:718px">值班管理</div>
<div class="a mt" style="left:59px;top:780px">个人设置</div>
<div class="a mt" style="left:59px;top:842px">报表统计</div>
<div class="a mt" style="left:59px;top:904px">流程配置</div>


<div class="a" style="left:1375px;top:914px;width:499px;height:1px;background:#e6e6e6"></div>
<div class="a" style="left:0;top:942px;width:1920px;height:1px;background:#12201f"></div>
<div class="a" style="left:60px;top:942px;width:430px;height:1px;background:#b8b8b8"></div>
<div class="a" style="left:615px;top:942px;width:63px;height:1px;background:#5a6464"></div>
</body></html>
